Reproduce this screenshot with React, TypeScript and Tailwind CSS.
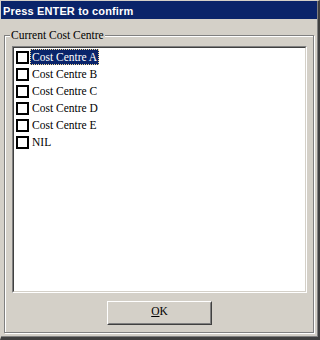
import React from "react";

const items = ["Cost Centre A", "Cost Centre B", "Cost Centre C", "Cost Centre D", "Cost Centre E", "NIL"];

export default function App() {
  return (
    <div className="w-[320px] h-[340px] bg-[#d4d0c8] border-t border-l border-t-[#d4d0c8] border-l-[#d4d0c8] border-r-2 border-b-[3px] border-r-[#404040] border-b-[#404040] flex">
      <div className="flex-1 flex flex-col border-r border-b border-[#808080]">
        <div className="h-[18px] bg-[#0a246a] text-white font-bold text-[11px] leading-[16px] pt-[2px] pl-[2px] tracking-[0.15px] whitespace-nowrap" style={{ fontFamily: '"Liberation Sans", Arial, sans-serif' }}>
          Press ENTER to confirm
        </div>
        <div className="flex-1 flex flex-col pt-[16px] pl-[3px] pr-[3px] pb-[3px]" style={{ fontFamily: '"Liberation Serif", "Times New Roman", serif' }}>
          <div className="relative flex-1 border border-[#808080] shadow-[inset_1px_1px_#ffffff,1px_1px_#ffffff] flex flex-col pt-[10px] pl-[7px] pr-[6px] pb-[7px] gap-[8px]">
            <div className="absolute top-[-7px] left-[5px] px-[1px] bg-[#d4d0c8] text-black text-[11.5px] leading-[13px] whitespace-nowrap">
              Current Cost Centre
            </div>
            <div className="flex-1 flex border border-t-[#808080] border-l-[#808080] border-r-white border-b-white">
              <div className="flex-1 bg-white border border-t-[#404040] border-l-[#404040] border-r-[#d4d0c8] border-b-[#d4d0c8] flex flex-col pt-[1px] pl-[2px] gap-[1px]">
                {items.map((it, i) => (
                  <div key={it} className="h-[16px] flex items-start">
                    <div className="w-[13px] h-[13px] mt-[2px] border-2 border-black bg-white shrink-0" />
                    <div
                      className={
                        i === 0
                          ? "ml-[1px] h-[16px] px-[1px] border border-dotted border-[#f5db95] bg-[#0a246a] text-white text-[11.5px] leading-[14px] whitespace-nowrap"
                          : "ml-[1px] h-[16px] px-[1px] border border-transparent text-black text-[11.5px] leading-[14px] whitespace-nowrap"
                      }
                    >
                      {it}
                    </div>
                  </div>
                ))}
              </div>
            </div>
            <div className="flex justify-center">
              <div className="w-[105px] h-[24px] flex border border-t-white border-l-white border-r-[#404040] border-b-[#404040]">
                <div className="flex-1 flex justify-center border border-t-[#d4d0c8] border-l-[#d4d0c8] border-r-[#808080] border-b-[#808080] pt-[1px] text-[11.5px] leading-[14px] text-black">
                  <span>
                    <span className="underline">O</span>K
                  </span>
                </div>
              </div>
            </div>
          </div>
        </div>
      </div>
    </div>
  );
}
